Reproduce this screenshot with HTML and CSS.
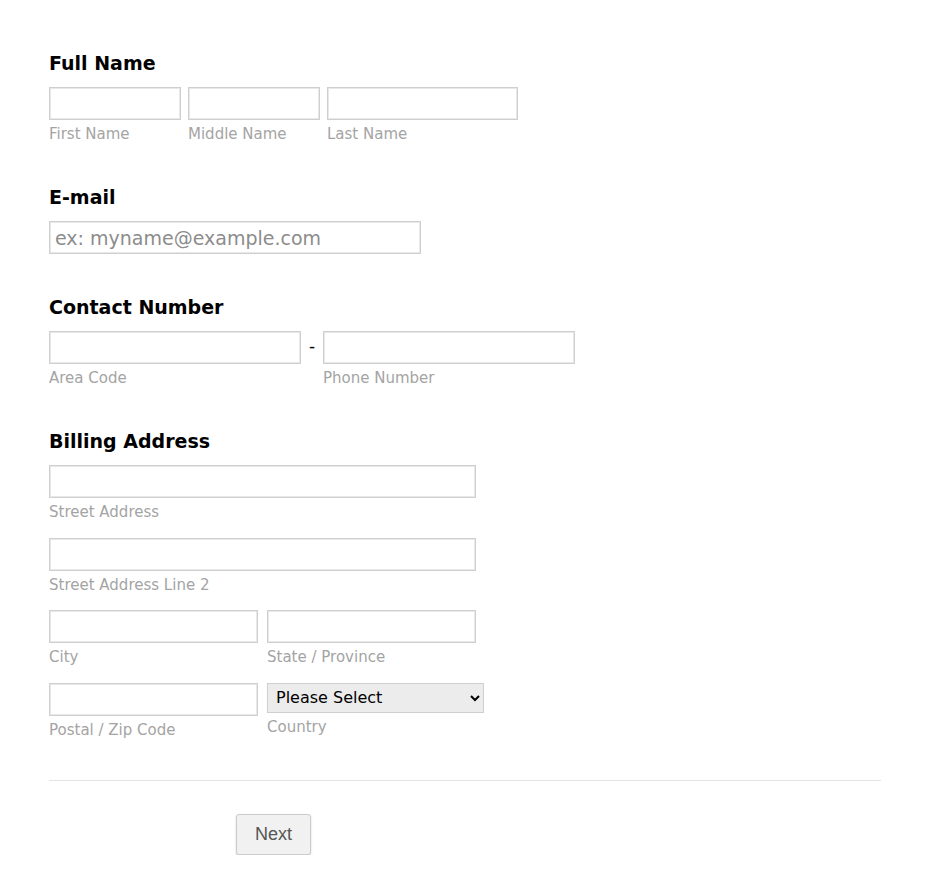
FILE: index.html
```html
<!DOCTYPE html>
<html lang="en">
<head>
    <meta charset="UTF-8">
    <title>Billing Form</title>
    <link rel="stylesheet" href="styles.css">
</head>
<body>
    <form id="form">
        <div class="section">
            <label class="heading">Full Name</label>
            <div class="row">
                <div class="field">
                    <input type="text" class="first">
                    <span class="sublabel">First Name</span>
                </div>
                <div class="field">
                    <input type="text" class="first">
                    <span class="sublabel">Middle Name</span>
                </div>
                <div class="field">
                    <input type="text" class="last">
                    <span class="sublabel">Last Name</span>
                </div>
            </div>
        </div>

        <div class="section email-section">
            <label class="heading">E-mail</label>
            <input type="email" class="email" placeholder="ex: myname@example.com">
        </div>

        <div class="section">
            <label class="heading">Contact Number</label>
            <div class="row phone">
                <div class="field">
                    <input type="text" class="phone-input">
                    <span class="sublabel">Area Code</span>
                </div>
                <span class="dash">-</span>
                <div class="field">
                    <input type="text" class="phone-input">
                    <span class="sublabel">Phone Number</span>
                </div>
            </div>
        </div>

        <div class="section">
            <label class="heading">Billing Address</label>
            <div class="address">
                <div class="field full">
                    <input type="text">
                    <span class="sublabel">Street Address</span>
                </div>
                <div class="field full">
                    <input type="text">
                    <span class="sublabel">Street Address Line 2</span>
                </div>
                <div class="field">
                    <input type="text">
                    <span class="sublabel">City</span>
                </div>
                <div class="field">
                    <input type="text">
                    <span class="sublabel">State / Province</span>
                </div>
                <div class="field">
                    <input type="text">
                    <span class="sublabel">Postal / Zip Code</span>
                </div>
                <div class="field">
                    <select>
                        <option>Please Select</option>
                    </select>
                    <span class="sublabel">Country</span>
                </div>
            </div>
        </div>

        <div class="buttons">
            <button type="button">Next</button>
        </div>
    </form>
</body>
</html>
```

FILE: styles.css
```css
body {
    margin: 0;
    background-color: #fff;
    font-family: 'DejaVu Sans', Verdana, sans-serif;
    color: #000;
}
#form {
    width: 832px;
    padding: 49px 49px 0;
}
.section {
    padding-bottom: 40px;
}
.email-section {
    padding-bottom: 39px;
}
.heading {
    display: block;
    font-size: 19px;
    font-weight: bold;
    line-height: 24px;
    margin-top: 2px;
    margin-bottom: 12px;
}
.row {
    display: flex;
    gap: 7px;
}
.field {
    display: flex;
    flex-direction: column;
}
input, select {
    box-sizing: border-box;
    height: 33px;
    margin: 0;
    padding: 2px 5px;
    border: 1px solid #cfcfcf;
    box-shadow: inset 0 0 0 1px #e8e8e8;
    border-radius: 0;
    font-family: 'DejaVu Sans', Verdana, sans-serif;
    font-size: 19px;
    background-color: #fff;
}
input::placeholder {
    color: #8c8c8c;
}
.sublabel {
    font-size: 15px;
    line-height: 18px;
    color: #a4a4a4;
    margin-top: 5px;
}
input.first {
    width: 132px;
}
input.last {
    width: 191px;
}
input.email {
    width: 372px;
}
.row.phone {
    gap: 0;
}
input.phone-input {
    width: 252px;
}
.dash {
    width: 22px;
    text-align: center;
    font-size: 17px;
    line-height: 31px;
}
.address {
    display: grid;
    grid-template-columns: 209px 209px;
    column-gap: 9px;
    row-gap: 16.5px;
    width: 427px;
}
.address .full {
    grid-column: 1 / 3;
}
.address .full input {
    width: 427px;
}
.address input {
    width: 209px;
}
select {
    width: 217px;
    height: 30px;
    font-size: 16px;
    padding: 0 4px;
    background-color: #ececec;
    box-shadow: none;
    border: 1px solid #cfcfcf;
    color: #000;
}
.buttons {
    border-top: 1px solid #e4e4e4;
    margin-top: 1px;
    padding-top: 33px;
    padding-left: 187px;
}
button {
    width: 75px;
    height: 41px;
    font-family: 'Liberation Sans', Arial, sans-serif;
    font-size: 18px;
    color: #555;
    background-color: #f1f1f1;
    border: 1px solid #ccc;
    border-radius: 3px;
    box-shadow: 0 1px 2px rgba(0, 0, 0, 0.2);
    cursor: pointer;
}
```
